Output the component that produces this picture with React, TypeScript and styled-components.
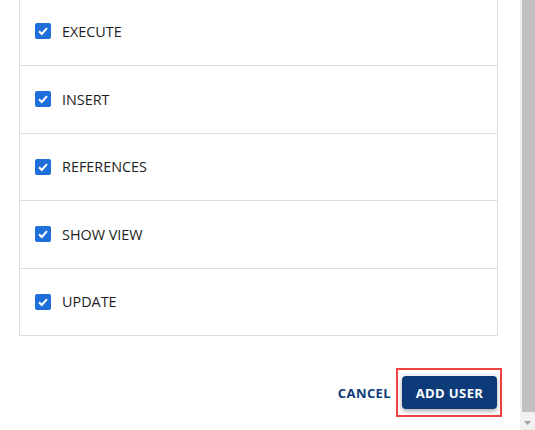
import React from 'react';
import styled, { createGlobalStyle } from 'styled-components';

const GlobalStyle = createGlobalStyle`
  html, body {
    margin: 0;
    padding: 0;
    background: #ffffff;
    overflow: hidden;
  }
  body {
    font-family: "Open Sans", "Noto Sans", Arial, sans-serif;
  }
`;

const Page = styled.div`
  display: flex;
  width: 535px;
  height: 430px;
  overflow: hidden;
`;

const Content = styled.div`
  flex: 1;
  display: flex;
  flex-direction: column;
  padding: 0 22px 0 19px;
`;

const PermissionList = styled.div`
  margin-top: -3.5px;
  border: 1px solid #dddddd;
`;

const Row = styled.label`
  display: flex;
  align-items: center;
  gap: 11px;
  height: 66.5px;
  padding-left: 15px;
  border-top: 1px solid #dddddd;
  font-size: 14.4px;
  color: #1e1e1e;
  cursor: pointer;

  &:first-child {
    border-top: none;
    height: 67.5px;
  }
`;

const Box = styled.span<{ $checked: boolean }>`
  display: flex;
  align-items: center;
  justify-content: center;
  width: 16px;
  height: 16px;
  border-radius: 2px;
  background: ${(p) => (p.$checked ? '#1f6fdb' : '#ffffff')};
  border: ${(p) => (p.$checked ? 'none' : '2px solid #757575')};
`;

const Footer = styled.div`
  display: flex;
  justify-content: flex-end;
  align-items: center;
  gap: 5px;
  margin-top: 32px;
  margin-right: -4px;
`;

const TextButton = styled.button`
  border: none;
  background: none;
  padding: 0 0 0 6px;
  font-family: inherit;
  font-size: 13px;
  font-weight: 700;
  letter-spacing: 0.4px;
  color: #0d3b7a;
  cursor: pointer;
`;

const Highlight = styled.div`
  border: 2px solid #ef4242;
  padding: 6px 3px 6px 4px;
`;

const PrimaryButton = styled.button`
  display: block;
  height: 33px;
  width: 95px;
  border: none;
  border-radius: 4px;
  background: #0d3b7a;
  color: #ffffff;
  font-family: inherit;
  font-size: 13px;
  font-weight: 700;
  letter-spacing: 0.4px;
  box-shadow: 0 2px 5px rgba(0, 0, 0, 0.35);
  cursor: pointer;
`;

const Scrollbar = styled.div`
  width: 15px;
  display: flex;
  flex-direction: column;
  background: #f1f1f1;
  padding-left: 2px;
  box-sizing: border-box;
`;

const Thumb = styled.div`
  flex: 1;
  background: #c1c1c1;
  margin-bottom: 3px;
`;

const ArrowCell = styled.div`
  height: 15px;
  display: flex;
  align-items: center;
  justify-content: center;
  margin-left: -2px;
`;

const permissions = ['EXECUTE', 'INSERT', 'REFERENCES', 'SHOW VIEW', 'UPDATE'];

const Checkbox = ({ checked }: { checked: boolean }) => (
  <Box $checked={checked}>
    {checked && (
      <svg width="12" height="12" viewBox="0 0 12 12">
        <path d="M2 6.2 L4.8 9 L10 3.2" fill="none" stroke="#ffffff" strokeWidth="2" />
      </svg>
    )}
  </Box>
);

const App = () => {
  return (
    <Page>
      <GlobalStyle />
      <Content>
        <PermissionList>
          {permissions.map((name) => (
            <Row key={name}>
              <Checkbox checked />
              {name}
            </Row>
          ))}
        </PermissionList>
        <Footer>
          <TextButton type="button">CANCEL</TextButton>
          <Highlight>
            <PrimaryButton type="submit">ADD USER</PrimaryButton>
          </Highlight>
        </Footer>
      </Content>
      <Scrollbar>
        <Thumb />
        <ArrowCell>
          <svg width="7" height="4" viewBox="0 0 7 4">
            <path d="M0 0 L7 0 L3.5 4 Z" fill="#a3a3a3" />
          </svg>
        </ArrowCell>
      </Scrollbar>
    </Page>
  );
};

export default App;
